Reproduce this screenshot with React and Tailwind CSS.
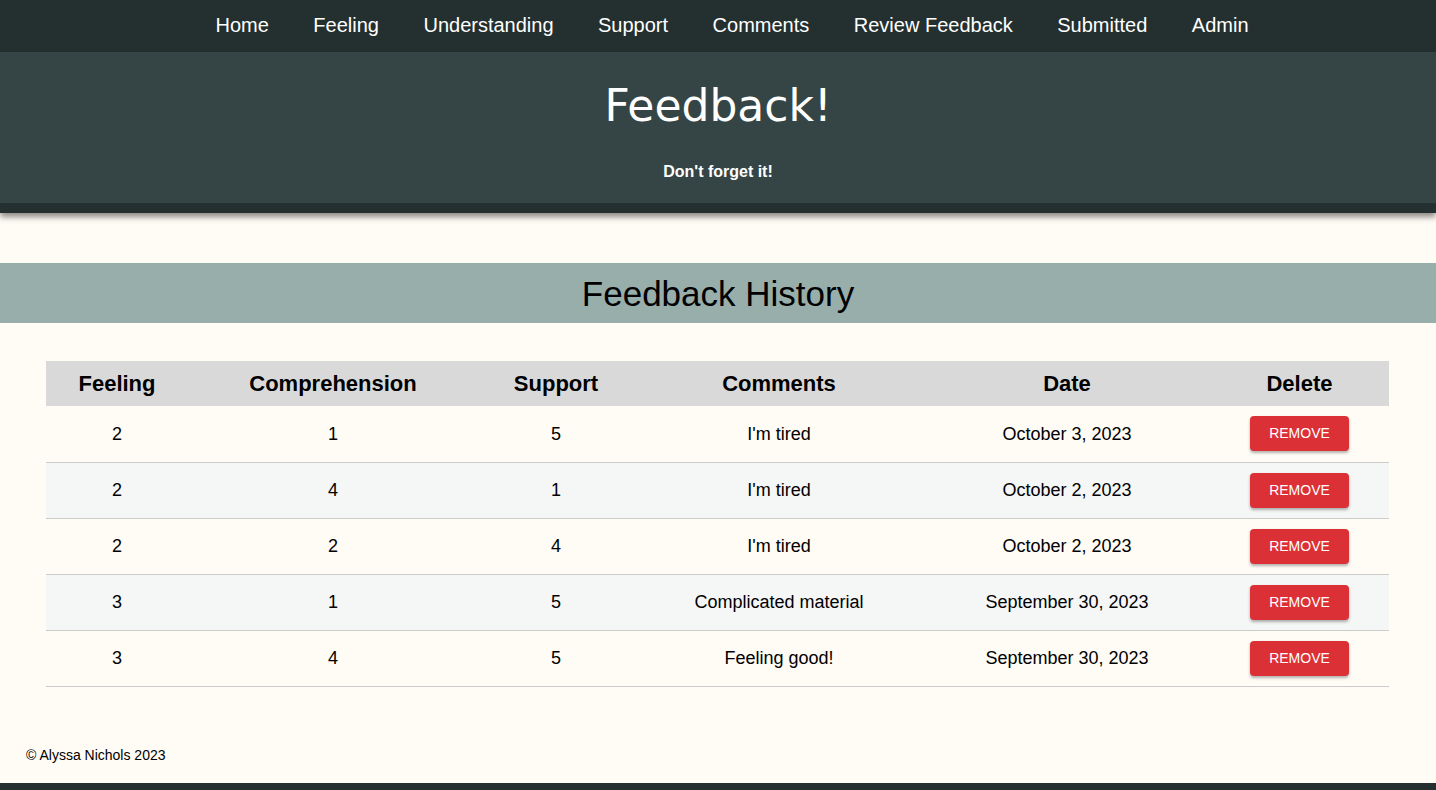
const links = ['Home', 'Feeling', 'Understanding', 'Support', 'Comments', 'Review Feedback', 'Submitted', 'Admin'];

const rows = [
  { feeling: 2, comp: 1, support: 5, comments: "I'm tired", date: 'October 3, 2023' },
  { feeling: 2, comp: 4, support: 1, comments: "I'm tired", date: 'October 2, 2023' },
  { feeling: 2, comp: 2, support: 4, comments: "I'm tired", date: 'October 2, 2023' },
  { feeling: 3, comp: 1, support: 5, comments: 'Complicated material', date: 'September 30, 2023' },
  { feeling: 3, comp: 4, support: 5, comments: 'Feeling good!', date: 'September 30, 2023' },
];

export default function App() {
  return (
    <div className="min-h-screen bg-[#fffbf5] text-black font-['Liberation_Sans',Arial,sans-serif]">
      {/* Nav */}
      <nav className="h-[52px] bg-[#242f2f] flex items-center justify-center pl-[28px] pb-[2px] gap-[44.5px]">
        {links.map(l => (
          <a key={l} className="text-white text-[20px] leading-none cursor-pointer">{l}</a>
        ))}
      </nav>

      {/* Header */}
      <header className="relative z-10 shadow-[0_4px_6px_rgba(0,0,0,0.45)]">
        <div className="h-[151px] bg-[#354545] flex flex-col items-center">
          <h1 className="mt-[28px] text-white text-[44px] leading-[52px] font-['DejaVu_Sans',Verdana,sans-serif]">Feedback!</h1>
          <p className="mt-[32px] text-white text-[16px] font-bold leading-none">Don't forget it!</p>
        </div>
        <div className="h-[10px] bg-[#242f2f]" />
      </header>

      {/* Section title */}
      <div className="mt-[50px] h-[60px] bg-[#98aeaa] flex items-center justify-center">
        <h2 className="text-[35px] leading-none">Feedback History</h2>
      </div>

      {/* Table */}
      <div className="pl-[46px] pr-[47px] pt-[38px]">
        <table className="w-full table-fixed border-collapse text-center">
          <colgroup>
            <col className="w-[142px]" />
            <col className="w-[290px]" />
            <col className="w-[156px]" />
            <col className="w-[290px]" />
            <col className="w-[286px]" />
            <col className="w-[179px]" />
          </colgroup>
          <thead>
            <tr className="h-[45px] bg-[#d9d9d9] text-[22px] font-bold">
              <th className="pb-[1px]">Feeling</th>
              <th className="pb-[1px]">Comprehension</th>
              <th className="pb-[1px]">Support</th>
              <th className="pb-[1px]">Comments</th>
              <th className="pb-[1px]">Date</th>
              <th className="pb-[1px]">Delete</th>
            </tr>
          </thead>
          <tbody className="text-[18px]">
            {rows.map((r, i) => (
              <tr key={i} className={`h-[56px] border-b border-[#cccccc] ${i % 2 === 1 ? 'bg-[#f5f6f6]' : ''}`}>
                <td className="pt-[1px]">{r.feeling}</td>
                <td className="pt-[1px]">{r.comp}</td>
                <td className="pt-[1px]">{r.support}</td>
                <td className="pt-[1px]">{r.comments}</td>
                <td className="pt-[1px]">{r.date}</td>
                <td>
                  <button className="w-[99px] h-[35px] rounded-[4px] bg-[#dc3037] text-white text-[14px] font-medium uppercase shadow-[0_2px_3px_rgba(0,0,0,0.3)]">
                    Remove
                  </button>
                </td>
              </tr>
            ))}
          </tbody>
        </table>
      </div>

      {/* Footer */}
      <footer className="mt-[61px]">
        <p className="px-[26px] text-[14px] leading-none">© Alyssa Nichols 2023</p>
        <div className="mt-[21px] h-[20px] bg-[#242f2f]" />
      </footer>
    </div>
  );
}
